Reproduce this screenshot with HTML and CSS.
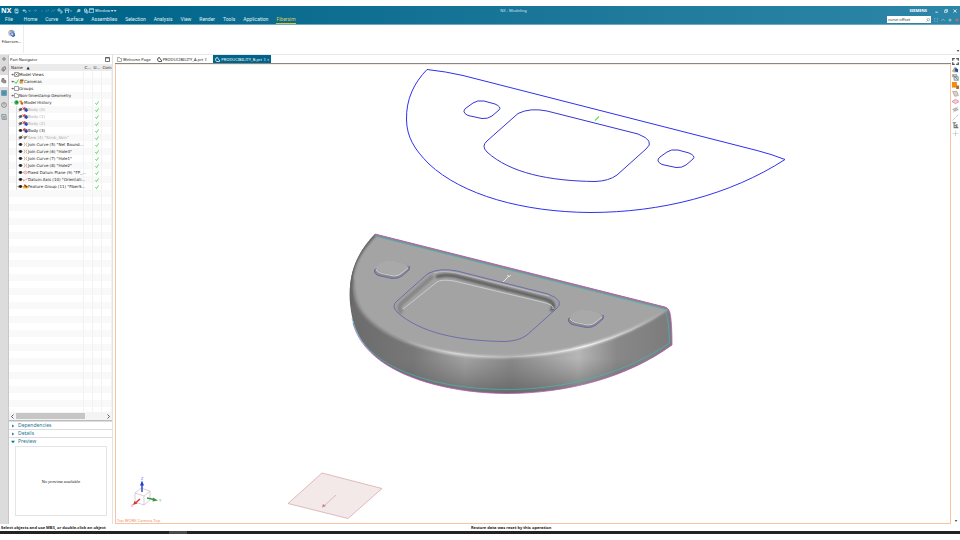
FILE: index.html
```html
<!DOCTYPE html>
<html lang="en">
<head>
<meta charset="utf-8">
<title>NX - Modeling</title>
<link rel="stylesheet" href="styles.css">
</head>
<body>
<svg class="defs" aria-hidden="true">
  <symbol id="eye" viewBox="0 0 10 10"><path d="M0 5Q5 0 10 5Q5 10 0 5Z" fill="#999"/><circle cx="5" cy="5" r="2.8" fill="#222"/></symbol>
  <symbol id="eyeoff" viewBox="0 0 10 10"><path d="M0 5Q5 0 10 5Q5 10 0 5Z" fill="#aaa"/><circle cx="5" cy="5" r="2.4" fill="#555"/><path d="M2 9L9 1" stroke="#444" stroke-width="1.5"/></symbol>
  <symbol id="body" viewBox="0 0 10 10"><path d="M0 2L4 0L6 3L3 6L0 5Z" fill="#d8433c"/><path d="M4 4L8 2L10 7L7 10L3 8Z" fill="#2747b8"/><path d="M1 6L4 7L3 9Z" fill="#7d8fc9"/></symbol>
  <symbol id="sew" viewBox="0 0 10 10"><path d="M1 2H8L5 8L1 6Z" fill="#b9a58b"/><path d="M2 8L9 2" stroke="#555" stroke-width="1.5"/></symbol>
  <symbol id="join" viewBox="0 0 10 10"><path d="M2 1Q6 4 2 9M8 1Q4 5 8 9" fill="none" stroke="#c7a398" stroke-width="1.6"/></symbol>
  <symbol id="plane" viewBox="0 0 10 10"><path d="M0 5L5 2L10 5L5 8Z" fill="#f8cdd8" stroke="#e58ba2" stroke-width="1.3"/></symbol>
  <symbol id="axis" viewBox="0 0 10 10"><path d="M1 8L9 3M1 8V5" fill="none" stroke="#e07892" stroke-width="1.4"/></symbol>
  <symbol id="group" viewBox="0 0 10 10"><path d="M0 4H10V9H0Z" fill="#f1bd20"/><path d="M3 0L8 4L5 7L2 4Z" fill="#d33827"/><path d="M6 3L9 5L7 8Z" fill="#333"/></symbol>
  <symbol id="check" viewBox="0 0 10 10"><path d="M1 5L4 9L9 1" fill="none" stroke="#3ed548" stroke-width="2"/></symbol>
  <symbol id="box" viewBox="0 0 10 10"><path d="M1 1H9V9H1Z" fill="#fff" stroke="#777" stroke-width="1.4"/></symbol>
  <symbol id="views" viewBox="0 0 10 10"><path d="M1 1H9V9H1Z" fill="#fff" stroke="#777" stroke-width="1.4"/><path d="M3 3L7 7M7 3L3 7" stroke="#555" stroke-width="1.3"/></symbol>
  <symbol id="folder" viewBox="0 0 10 10"><path d="M1 9V1H5L6 3H9V9Z" fill="#fff" stroke="#888" stroke-width="1.4"/></symbol>
  <symbol id="camera" viewBox="0 0 10 10"><path d="M1 4H8V9H1Z" fill="#db9b48"/><path d="M2 1H9V4H2Z" fill="#9b6532"/></symbol>
  <symbol id="clock" viewBox="0 0 10 10"><circle cx="5" cy="5" r="4.5" fill="#2fb944"/><path d="M5 2V5L8 6" fill="none" stroke="#126a23" stroke-width="1.4"/></symbol>
  <symbol id="history" viewBox="0 0 10 10"><path d="M1 1H6V5H1Z" fill="#e18b37"/><path d="M4 4L9 5L7 10L3 8Z" fill="#bc5b35"/></symbol>
  <symbol id="gem" viewBox="0 0 10 10"><path d="M0 7L4 1L7 3L9 9H2Z" fill="#8d9fc5"/><path d="M5 3L9 5L8 9L4 7Z" fill="#294f91"/><path d="M0 7L3 4L4 9Z" fill="#e1c34c"/></symbol>
  <symbol id="part" viewBox="0 0 10 10"><path d="M2 2L5 1L7 5L9 6V9H3L1 6Z" fill="none" stroke="currentColor" stroke-width="1.5"/></symbol>
</svg>

<header class="header">
  <div class="titlebar">
    <div class="quick">
      <b class="nx">NX</b>
      <svg class="qicons" viewBox="14 6 75 8" fill="none" stroke="#c6e2ec" stroke-width=".7" aria-hidden="true">
        <path d="M15 8h3v4h-3zM16 8v1.500h1.500M16 11.500h2"/>
        <path d="M24.500 8L23 9.500L24.500 11M23 9.500h2.500q1.500 1 0 2.500"/>
        <path d="M29 9.500l.6.8l.6-.8M70.500 9.500l.6.8l.6-.8"/>
        <g opacity=".3"><path d="M35 8l1.500 1.500l-1.500 1.500M36.500 9.500h-3M41 10h2M47 8l-1.500 3M49 8l-1.500 3M53 8l-1.500 3M55 8l-1.500 3"/></g>
        <path d="M58 8h2v2h-2zM60 10h2v2h-2M65 8h4v1.500h-4zM65.500 10v2M68.500 10v2M77 11.500q0-2.500 3-2M78 8.500h2v2h-2zM84.500 8h2v2h-2zM86 10h2v2h-2zM85 10v2"/>
      </svg>
      <button class="winmenu" type="button"><svg viewBox="0 0 10 10" aria-hidden="true"><path d="M1 1H9V9H1ZM1 3H9" fill="none" stroke="#d5e8ef" stroke-width="1.2"/></svg>Window ▾ ▾</button>
    </div>
    <span class="apptitle">NX - Modeling</span>
    <div class="winctl">
      <b class="brand">SIEMENS</b>
      <button type="button" aria-label="Minimize"><svg viewBox="0 0 10 10"><path d="M1 8H7" stroke="#fff" stroke-width="2"/></svg></button>
      <button type="button" aria-label="Restore"><svg viewBox="0 0 10 10"><path d="M1 4H7V9H1ZM3 4V1H9V7H7" fill="none" stroke="#fff" stroke-width="1.5"/></svg></button>
      <button type="button" aria-label="Close"><svg viewBox="0 0 10 10"><path d="M1 1L9 9M9 1L1 9" stroke="#fff" stroke-width="1.8"/></svg></button>
    </div>
  </div>
  <div class="menubar">
    <nav class="menu">
      <a href="#" class="file">File</a><a href="#">Home</a><a href="#">Curve</a><a href="#">Surface</a><a href="#">Assemblies</a><a href="#">Selection</a><a href="#">Analysis</a><a href="#">View</a><a href="#">Render</a><a href="#">Tools</a><a href="#">Application</a><a href="#" class="current">Fibersim</a>
    </nav>
    <div class="tools">
      <div class="search"><input type="text" aria-label="Command search" value="curve offset"><svg viewBox="0 0 10 10" aria-hidden="true"><circle cx="6" cy="4" r="3" fill="none" stroke="#666" stroke-width="1.2"/><path d="M4 6L1 9" stroke="#666" stroke-width="1.5"/></svg></div>
      <button type="button" aria-label="Full screen"><svg viewBox="0 0 10 10"><path d="M1 4V1H4M6 1H9V4M9 6V9H6M4 9H1V6" fill="none" stroke="#a5cddb"/></svg></button>
      <button type="button" aria-label="Collapse ribbon"><svg viewBox="0 0 10 10"><path d="M1 7L5 3L9 7" fill="none" stroke="#b5d6e2" stroke-width="1.6"/></svg></button>
      <button type="button" aria-label="Help"><svg viewBox="0 0 10 10"><circle cx="5" cy="5" r="4" fill="#7db4c8"/></svg></button>
      <button type="button" aria-label="Alerts"><svg viewBox="0 0 10 10"><circle cx="5" cy="5" r="4" fill="#ad6f78"/></svg></button>
    </div>
  </div>
</header>

<div class="ribbon">
  <button class="ribbonbtn" type="button">
    <svg viewBox="1 0 22 24" aria-hidden="true"><path d="M2 11Q4 1 13 2L11 10Z" fill="#e1c65b"/><path d="M7 4Q15 0 19 6L21 14L12 11Z" fill="#8296cf"/><path d="M3 9Q9 4 16 9L17 18Q9 22 4 16Z" fill="#b8c2de"/><path d="M8 11Q15 8 20 11L22 18L16 22L11 17Z" fill="#3a63ae"/><path d="M11 11L17 12L16 17L12 16Z" fill="#e5ebf8"/></svg>
    <span>Fibersim...</span>
  </button>
  <span class="more">▾</span>
</div>

<main class="work">
  <div class="dock">
    <button type="button" aria-label="Settings"><svg viewBox="0 0 10 10"><circle cx="5" cy="5" r="3" fill="none" stroke="#666" stroke-width="2"/></svg></button>
    <button type="button" aria-label="Assembly Navigator"><svg viewBox="0 0 10 10"><path d="M2 3L7 1L8 5L4 9M1 5H5V8H2Z" fill="#bbb" stroke="#777" stroke-width="1.3"/></svg></button>
    <button type="button" class="on" aria-label="Part Navigator"><svg viewBox="0 0 10 10"><path d="M2 1H5V4H8V8H4L1 6Z" fill="#999" stroke="#666" stroke-width="1.2"/></svg></button>
    <button type="button" aria-label="Library"><svg viewBox="0 0 10 10"><path d="M1 1H9V9H1Z" fill="#6a98ae" stroke="#427b99"/><path d="M3 3H7V7H3Z" fill="#2698b9"/></svg></button>
    <button type="button" aria-label="History"><svg viewBox="0 0 10 10"><circle cx="5" cy="5" r="4" fill="none" stroke="#666" stroke-width="1.1"/><path d="M5 2V6" stroke="#666"/></svg></button>
    <button type="button" aria-label="Roles"><svg viewBox="0 0 10 10"><path d="M1 1H8L9 9H2ZM3 3L7 8M7 3L3 8" fill="none" stroke="#668085" stroke-width="1.2"/></svg></button>
  </div>

  <aside class="panel">
    <div class="paneltitle"><span>Part Navigator</span><svg viewBox="0 0 10 10" aria-hidden="true"><path d="M1 1H9V9H1ZM1 2H9" fill="none" stroke="#444" stroke-width="1.5"/></svg></div>
    <div class="treewrap">
      <table class="tree">
        <colgroup><col class="cname"><col class="cc"><col class="cu"><col class="ccom"></colgroup>
        <thead><tr><th>Name &nbsp; ▲</th><th>C...</th><th>U...</th><th>Com</th></tr></thead>
        <tbody>
          <tr><td><div class="n"><i>+</i><svg><use href="#views"/></svg>Model Views</div></td><td></td><td></td><td></td></tr>
          <tr><td><div class="n"><i>+</i><svg><use href="#check"/></svg><svg><use href="#camera"/></svg>Cameras</div></td><td></td><td></td><td></td></tr>
          <tr><td><div class="n"><i>+</i><svg><use href="#box"/></svg>Groups</div></td><td></td><td></td><td></td></tr>
          <tr><td><div class="n"><i>+</i><svg><use href="#folder"/></svg>Non-timestamp Geometry</div></td><td></td><td></td><td></td></tr>
          <tr><td><div class="n"><i>-</i><svg><use href="#clock"/></svg><svg><use href="#history"/></svg>Model History</div></td><td></td><td><svg><use href="#check"/></svg></td><td></td></tr>
          <tr><td><div class="n sub dim"><i></i><svg><use href="#eyeoff"/></svg><svg><use href="#body"/></svg>Body (0)</div></td><td></td><td><svg><use href="#check"/></svg></td><td></td></tr>
          <tr><td><div class="n sub dim"><i></i><svg><use href="#eyeoff"/></svg><svg><use href="#body"/></svg>Body (1)</div></td><td></td><td><svg><use href="#check"/></svg></td><td></td></tr>
          <tr><td><div class="n sub dim"><i></i><svg><use href="#eyeoff"/></svg><svg><use href="#body"/></svg>Body (2)</div></td><td></td><td><svg><use href="#check"/></svg></td><td></td></tr>
          <tr><td><div class="n sub"><i></i><svg><use href="#eye"/></svg><svg><use href="#body"/></svg>Body (3)</div></td><td></td><td><svg><use href="#check"/></svg></td><td></td></tr>
          <tr><td><div class="n sub dim"><i></i><svg><use href="#eyeoff"/></svg><svg><use href="#sew"/></svg>Sew (4) "Simb_Skin"</div></td><td></td><td><svg><use href="#check"/></svg></td><td></td></tr>
          <tr><td><div class="n sub"><i></i><svg><use href="#eye"/></svg><svg><use href="#join"/></svg>Join Curve (5) "Net Bound...</div></td><td></td><td><svg><use href="#check"/></svg></td><td></td></tr>
          <tr><td><div class="n sub"><i></i><svg><use href="#eye"/></svg><svg><use href="#join"/></svg>Join Curve (6) "Hole3"</div></td><td></td><td><svg><use href="#check"/></svg></td><td></td></tr>
          <tr><td><div class="n sub"><i></i><svg><use href="#eye"/></svg><svg><use href="#join"/></svg>Join Curve (7) "Hole1"</div></td><td></td><td><svg><use href="#check"/></svg></td><td></td></tr>
          <tr><td><div class="n sub"><i></i><svg><use href="#eye"/></svg><svg><use href="#join"/></svg>Join Curve (8) "Hole2"</div></td><td></td><td><svg><use href="#check"/></svg></td><td></td></tr>
          <tr><td><div class="n sub"><i></i><svg><use href="#eye"/></svg><svg><use href="#plane"/></svg>Fixed Datum Plane (9) "FP_...</div></td><td></td><td><svg><use href="#check"/></svg></td><td></td></tr>
          <tr><td><div class="n sub"><i></i><svg><use href="#eye"/></svg><svg><use href="#axis"/></svg>Datum Axis (10) "Orientati...</div></td><td></td><td><svg><use href="#check"/></svg></td><td></td></tr>
          <tr><td><div class="n sub"><i>+</i><svg><use href="#eye"/></svg><svg><use href="#group"/></svg>Feature Group (11) "FiberS...</div></td><td></td><td><svg><use href="#check"/></svg></td><td></td></tr>
        </tbody>
      </table>
      <div class="blank"><span></span><span></span><span></span><span></span></div>
    </div>
    <div class="hscroll"><svg viewBox="0 0 10 10"><path d="M7 1L3 5L7 9" fill="none" stroke="#444" stroke-width="1.7"/></svg><div class="track"><div class="thumb"></div></div><svg viewBox="0 0 10 10"><path d="M3 1L7 5L3 9" fill="none" stroke="#444" stroke-width="1.7"/></svg></div>
    <button class="section" type="button"><svg viewBox="0 0 10 10"><path d="M3 1L8 5L3 9Z" fill="#0f6f92"/></svg>Dependencies</button>
    <button class="section" type="button"><svg viewBox="0 0 10 10"><path d="M3 1L8 5L3 9Z" fill="#0f6f92"/></svg>Details</button>
    <button class="section open" type="button"><svg viewBox="0 0 10 10"><path d="M0 2H10L5 8Z" fill="#0f6f92"/></svg>Preview</button>
    <div class="preview">No preview available</div>
  </aside>

  <section class="docs">
    <div class="doctabs">
      <button type="button"><svg><use href="#folder"/></svg>Welcome Page</button>
      <button type="button"><svg><use href="#part"/></svg>PRODUCIBILITY_A.prt ⇧</button>
      <button type="button" class="active"><svg><use href="#part"/></svg>PRODUCIBILITY_B.prt ⇧ ×</button>
    </div>
    <div class="canvas">
      <svg class="scene" viewBox="116 65 834 458" role="img" aria-label="3D model">
        <defs>
          <linearGradient id="side" gradientUnits="userSpaceOnUse" x1="349" y1="0" x2="672" y2="0">
            <stop offset="0" stop-color="#6b6b6b"/><stop offset=".08" stop-color="#707070"/><stop offset=".2" stop-color="#787878"/><stop offset=".36" stop-color="#a2a2a2"/><stop offset=".5" stop-color="#888"/><stop offset=".6" stop-color="#9d9d9d"/><stop offset=".71" stop-color="#b6b6b6"/><stop offset=".83" stop-color="#888"/><stop offset="1" stop-color="#7b7b7b"/>
          </linearGradient>
          <linearGradient id="shade" x1="0" y1="0" x2="0" y2="1"><stop offset=".78" stop-color="#666" stop-opacity="0"/><stop offset="1" stop-color="#5a5a5a" stop-opacity=".7"/></linearGradient>
          <linearGradient id="rim" gradientUnits="userSpaceOnUse" x1="349" y1="0" x2="672" y2="0">
            <stop offset="0" stop-color="#808080"/><stop offset=".2" stop-color="#b0b0b0"/><stop offset=".33" stop-color="#dadada"/><stop offset=".5" stop-color="#b8b8b8"/><stop offset=".73" stop-color="#f5f5f5"/><stop offset=".87" stop-color="#c8c8c8"/><stop offset="1" stop-color="#999"/>
          </linearGradient>
          <filter id="soft" x="-20%" y="-20%" width="140%" height="140%"><feGaussianBlur stdDeviation="1"/></filter>
          <clipPath id="solid"><path d="M375 234L665 307Q669 308 670 313Q672 322 672 345C628 377 568 393.500 506 393.500C453 393 407 380 381 361C362 347 352 328 350 303C348 272 357 253 375 234Z"/></clipPath>
          <path id="pocket" d="M518 113.500Q530 107.500 547 111L638 134Q656 141 646 149L617 175Q609 181 595 181.500C549 181 510 173 487 152Q481 146 487 141Z"/>
          <clipPath id="well"><use href="#pocket" x="-90" y="160"/></clipPath>
          <path id="hole" d="M473 103Q477 100 484 101L495 104Q502 107 499 110L492 116Q488 119 482 118.500L468 115.500Q461 112 466 108Z"/>
        </defs>
        <g fill="none" stroke="#3030f0" stroke-width="1">
          <path d="M427 69.500Q446 71.500 463 75.500L757 150.500Q771 154 785 159.500C730 195 661 212.500 590 212.500C523 212 462 195 429 164C414 149 407 137 406.500 120C406 99 414 83 427 69.500Z"/>
          <g stroke="#3535d8"><use href="#pocket"/><use href="#hole"/><use href="#hole" x="194" y="49"/></g>
        </g>
        <path d="M595 120.500L599 116.500" stroke="#55ed55" stroke-width="1.200"/>

        <g clip-path="url(#solid)">
          <path d="M345 230H676V398H345Z" fill="url(#side)"/>
          <path d="M375 234L665 307Q669 308 670 313Q672 322 672 345C628 377 568 393.500 506 393.500C453 393 407 380 381 361C362 347 352 328 350 303C348 272 357 253 375 234Z" fill="url(#shade)"/>
          <path d="M375 232L670 308C622 340 564 357 500 357C440 356 384 339 362 312C349 295 346 262 375 232Z" fill="#a4a4a4"/>
          <path d="M668 309C622 340 564 357 500 357C440 357 384 340 362 312C356 304 353 294 353 279" fill="none" stroke="url(#rim)" stroke-width="2.500" filter="url(#soft)"/>
          <path d="M667 310C622 340 564 357 500 357C468 357 435 351 409 342" fill="none" stroke="url(#rim)" stroke-width="1"/>
          <path d="M351 305C347 270 357 253 375 234" fill="none" stroke="#666" stroke-width="4" filter="url(#soft)"/>
          <path d="M376 235L667 308" stroke="#8a8a8a" stroke-width="3"/>
        </g>
        <g fill="none">
          <path d="M375 234L665 307Q669 308 670 313Q672 322 672 345C628 377 568 393.500 506 393.500C453 393 407 380 381 361C366 350 357 338 353 323" stroke="#b759b7" stroke-width=".8"/>
          <path d="M375 236L665 309.500Q669 320 669.500 343C626 373 567 389.500 506 389.500C452 389 409 378 382 360C366 349 356 336 352 318" stroke="#45b9b6" stroke-width=".7"/>
        </g>
        <g clip-path="url(#well)">
          <path d="M390 260H565V345H390Z" fill="#a3a3a3"/>
          <path d="M436 277Q443 274 455 276L545 299Q558 303 551 311" fill="none" stroke="#606060" stroke-width="3.500" filter="url(#soft)"/>
          <path d="M433 276L401 304Q397 308 402 313" fill="none" stroke="#858585" stroke-width="4" filter="url(#soft)"/>
          <path d="M403 309L437 282Q441 279 454 281L542 302Q555 305 553 309" fill="none" stroke="#cfcfcf" stroke-width=".9"/>
          <path d="M434 273Q442 270 457 273L549 296" fill="none" stroke="#bdbdbd" stroke-width="1"/>
        </g>
        <use href="#pocket" x="-90" y="160" fill="none" stroke="#5656ae" stroke-width=".7"/>
        <g id="bump">
          <use href="#hole" x="-90" y="160" fill="#8a8a8a"/>
          <path d="M409.500 266L409 270L402 276Q398 279 392 278.500L378 275.500Q373 273 375 269" fill="none" stroke="#6060b5" stroke-width=".8"/>
          <path d="M382 262Q387 259.500 395 261L404 263.500Q410 266 407 269L401 274Q398 276 392 275L379 272Q374 270 377 266Z" fill="#a9a9a9"/>
          <path d="M376 270Q378 273 382 273.500L394 276Q399 276 402 273L408 268" fill="none" stroke="#cfcfcf" stroke-width="1"/>
        </g>
        <use href="#bump" x="194" y="49"/>
        <path d="M503 282L509 276M507 275.500L509.500 276.500L510.500 275" fill="none" stroke="#eee" stroke-width=".9"/>

        <path d="M322 473L382 488.500L348 518.500L288 503.500Z" fill="#f4e9e9" stroke="#dba9ad" stroke-width=".8"/>
        <path d="M336 495L324 506" stroke="#dba9ad" stroke-width=".8"/><path d="M322 507.500L323 504L326 506Z" fill="#c98088"/>
        <g fill="none" stroke="#cbb9cb" stroke-width=".7"><path d="M135 493L144 496V505L135 502ZM135 493L141 488L150 491L144 496M150 491V500L144 505"/></g>
        <path d="M142 492V484" stroke="#1f3fd0" stroke-width="1.400"/><path d="M140 485.500L142 480.500L144 485.500Z" fill="#1f3fd0"/>
        <path d="M147 498L154 499.500" stroke="#3f9646" stroke-width="1.400"/><path d="M153 497.500L158 500.500L152.500 501.500Z" fill="#3f9646"/>
        <path d="M140 499L136 502.500" stroke="#da3434" stroke-width="1.400"/><path d="M133 505L134.500 501L137.500 503.500Z" fill="#da3434"/>
        <g class="axes"><text x="141" y="480" fill="#5271dd">Z</text><text x="159" y="502" fill="#65b879">Y</text><text x="131" y="507" fill="#dc6767">X</text></g>
      </svg>
      <span class="camera">Top WORK Camera Top</span>
    </div>
  </section>

  <div class="rightbar">
    <button type="button" aria-label="Fit"><svg viewBox="0 0 10 10"><path d="M1 4V1H4M6 1H9V4M9 6V9H6M4 9H1V6" fill="none" stroke="#555" stroke-width="1.8"/></svg></button>
    <button type="button" aria-label="Orient"><svg><use href="#gem"/></svg></button>
    <button type="button" aria-label="Section"><svg viewBox="0 0 10 10"><path d="M1 1H7V4H1ZM3 4H9V9H3ZM1 1L9 9" fill="#cbd9dc" stroke="#73878c"/></svg></button>
    <button type="button" aria-label="Render style"><svg viewBox="0 0 10 10"><path d="M0 0H7V8H0Z" fill="#f28c13"/><path d="M6 5H10V10H6Z" fill="#b26b29"/></svg></button>
    <button type="button" aria-label="Show"><svg viewBox="0 0 10 10"><path d="M1 2H7L9 8L4 9Z" fill="#ddd1c5" stroke="#a29b93"/></svg></button>
    <button type="button" aria-label="Datum"><svg><use href="#plane"/></svg></button>
    <button type="button" aria-label="Hide"><svg viewBox="0 0 10 10"><path d="M1 5Q5 1 9 5Q5 9 1 5M2 9L8 1" fill="#ddd" stroke="#999"/></svg></button>
    <button type="button" aria-label="Line"><svg viewBox="0 0 10 10"><path d="M1 9L9 1" stroke="#74bfe3" stroke-width="1.3" stroke-dasharray="2 1"/></svg></button>
    <button type="button" aria-label="Note"><svg viewBox="0 0 10 10"><path d="M1 1H6M3 1V8H9M4 4L8 8M7 3V8" fill="none" stroke="#777" stroke-width="1.5"/></svg></button>
    <button type="button" aria-label="Point"><svg viewBox="0 0 10 10"><path d="M5 1V9M1 5H9" stroke="#a5d2e6"/></svg></button>
    <span class="end">▾</span>
  </div>
</main>

<footer class="status"><span class="cue">Select objects and use MB3, or double-click an object</span><span>Restore data was reset by this operation</span></footer>
<div class="taskbar"><span></span></div>
</body>
</html>
```
FILE: styles.css
```css
* { box-sizing: border-box; }
html, body { height: 100%; }
body {
  margin: 0;
  padding: 6px 0;
  display: flex;
  flex-direction: column;
  background: #fff;
  color: #222;
  font: 4px/7px "Noto Sans", "Open Sans", sans-serif;
  overflow: hidden;
}
button {
  border: 0;
  padding: 0;
  background: none;
  color: inherit;
  font: inherit;
  display: flex;
  align-items: center;
  justify-content: center;
}
a { color: inherit; text-decoration: none; }
svg { display: block; flex: none; width: 5px; height: 5px; }
.defs { position: absolute; width: 0; height: 0; }

.header {
  background: linear-gradient(90deg, #00658a 10%, #1f7a9c 66%, #2d86a8);
  border-bottom: 1px solid #6fa9c0;
  color: #e4f1f5;
}
.titlebar, .menubar { display: flex; align-items: center; }
.titlebar { height: 9px; }
.quick { display: flex; align-items: center; width: 52%; padding-left: 1px; }
.nx { width: 13px; font-size: 7px; color: #fff; }
.qicons { width: 75px; height: 8px; }
.winmenu { gap: 1px; }
.apptitle { color: #d3e5ec; padding-left: 1px; }
.winctl { margin-left: auto; display: flex; align-items: center; gap: 5px; padding-right: 3px; }
.winctl svg { width: 4px; height: 4px; }
.brand { color: #fff; margin-right: 3px; }
.menubar { height: 9px; justify-content: space-between; font: 5px/9px Roboto, "Noto Sans", sans-serif; }
.menu { display: flex; gap: 8px; padding-left: 5px; }
.file { margin-right: 3px; }
.menu .current { color: #ddce58; box-shadow: inset 0 -1px #d8c545; }
.tools { display: flex; align-items: center; gap: 3px; padding-right: 1px; }
.tools svg { width: 4px; height: 4px; }
.search { display: flex; align-items: center; width: 44px; height: 7px; padding-right: 1px; background: #fff; }
.search input {
  flex: 1;
  min-width: 0;
  height: 7px;
  border: 0;
  padding: 0 1px;
  background: none;
  color: #333;
  font: 4px/7px "Noto Sans", sans-serif;
}

.ribbon {
  height: 30px;
  flex: none;
  display: flex;
  justify-content: space-between;
  border-bottom: 1px solid #e8e8e8;
}
.ribbonbtn {
  width: 24px;
  margin-bottom: 1px;
  border-right: 1px solid #ececec;
  flex-direction: column;
  justify-content: flex-start;
  padding-top: 4px;
}
.ribbonbtn svg { width: 9px; height: 9px; }
.more { align-self: flex-end; padding-right: 1px; }

.work { flex: 1; min-height: 0; display: flex; }
.dock { width: 9px; background: #dcdcdc; border-right: 1px solid #c8c8c8; }
.dock button { width: 8px; height: 12px; }
.dock button:first-child { height: 8px; }
.dock .on { background: #fff; }
.dock svg { width: 6px; height: 6px; }
.dock button:first-child svg { width: 4px; height: 4px; }

.panel { width: 104px; display: flex; flex-direction: column; border-right: 1px solid #e2e2e2; }
.paneltitle { display: flex; justify-content: space-between; align-items: center; height: 9px; padding: 0 2px 0 1px; }
.treewrap { flex: 1; min-height: 0; display: flex; flex-direction: column; font-family: "DejaVu Sans", sans-serif; }
.tree { width: 100%; table-layout: fixed; border-collapse: collapse; }
.cc { width: 9px; }
.cu { width: 9px; }
.ccom { width: 10px; }
.tree th {
  height: 7px;
  padding: 0 0 0 2px;
  background: #ebebeb;
  text-align: left;
  font-weight: 400;
  font-size: 4px;
  line-height: 7px;
  white-space: nowrap;
  overflow: hidden;
}
.tree th + th { padding: 0 0 0 1px; }
.tree td { height: 7px; padding: 0; border-right: 1px solid #f2f2f2; }
.tree td > svg { margin: 0 auto; width: 4px; height: 4px; }
.tree tbody tr:nth-child(even) { background: #f9f9f9; }
.n { display: flex; align-items: center; height: 7px; padding-left: 2px; white-space: nowrap; }
.n i { width: 3px; flex: none; font-style: normal; }
.sub { padding-left: 7px; }
.sub i { width: 2px; border-left: 1px solid #ddd; height: 7px; }
.dim { color: #aaa; }
.blank {
  flex: 1;
  display: grid;
  grid-template-columns: 1fr 9px 9px 10px;
  background: repeating-linear-gradient(#f9f9f9 0 7px, #fff 7px 14px);
}
.blank span { border-right: 1px solid #f2f2f2; }
.hscroll { display: flex; align-items: center; gap: 1px; height: 9px; padding: 0 1px; border-bottom: 1px solid #bbb; background: #f4f4f4; }
.track { flex: 1; }
.thumb { width: 78%; height: 6px; background: #c6c6c6; }
.section {
  justify-content: flex-start;
  gap: 3px;
  height: 8px;
  padding-left: 2px;
  border-top: 1px solid #ddd;
  color: #1c7696;
  font-size: 5px;
}
.section svg { width: 4px; height: 4px; }
.preview {
  display: grid;
  place-items: center;
  height: 70px;
  margin: 1px 5px 8px 6px;
  border: 1px solid #e4e4e4;
}

.docs { flex: 1; min-width: 0; display: flex; flex-direction: column; margin-left: 2px; }
.doctabs { display: flex; gap: 6px; flex: none; height: 9px; padding-left: 2px; border-bottom: 1px solid #8d8782; }
.doctabs button { gap: 1px; white-space: nowrap; }
.doctabs svg { width: 5px; height: 5px; }
.doctabs .active { background: #00638a; color: #fff; padding: 0 2px; }
.canvas { position: relative; flex: 1; min-height: 0; border: 1px solid #f9c3a0; border-top-color: #fdeadf; }
.scene { width: 100%; height: 100%; }
.axes { font-size: 4px; }
.camera { position: absolute; left: 1px; bottom: 0; line-height: 5px; color: #f08c62; }

.rightbar { width: 9px; display: flex; flex-direction: column; align-items: center; padding-top: 2px; }
.rightbar button { height: 8px; }
.rightbar svg { width: 7px; height: 7px; }
.end { margin-top: auto; }

.status { display: flex; flex: none; height: 7px; padding-left: 1px; font-weight: 700; }
.cue { width: 49%; padding-right: 2px; white-space: nowrap; }
.taskbar { flex: none; height: 3px; background: #222; }
.taskbar span { display: block; width: 18px; height: 3px; margin-left: 169px; background: #4a4a4a; }
```
